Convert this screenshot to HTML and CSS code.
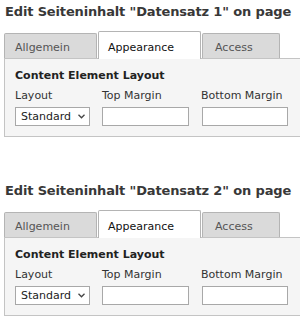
FILE: index.html
```html
<!DOCTYPE html>
<html>
<head>
<meta charset="utf-8">
<link rel="stylesheet" href="styles.css">
</head>
<body>
<section class="block">
  <h1 class="title">Edit Seiteninhalt "Datensatz 1" on page</h1>
  <div class="tabs">
    <div class="tab tab-a">Allgemein</div>
    <div class="tab tab-b active">Appearance</div>
    <div class="tab tab-c">Access</div>
  </div>
  <div class="panel">
    <div class="heading">Content Element Layout</div>
    <div class="fields">
      <div class="label">Layout</div>
      <div class="label">Top Margin</div>
      <div class="label">Bottom Margin</div>
      <div class="select">Standard<svg class="chev" width="7" height="5" viewBox="0 0 7 5"><polyline points="0.5,0.8 3.5,3.8 6.5,0.8" fill="none" stroke="#444" stroke-width="1.3"/></svg></div>
      <div class="input"></div>
      <div class="input"></div>
    </div>
  </div>
</section>
<section class="block">
  <h1 class="title">Edit Seiteninhalt "Datensatz 2" on page</h1>
  <div class="tabs">
    <div class="tab tab-a">Allgemein</div>
    <div class="tab tab-b active">Appearance</div>
    <div class="tab tab-c">Access</div>
  </div>
  <div class="panel">
    <div class="heading">Content Element Layout</div>
    <div class="fields">
      <div class="label">Layout</div>
      <div class="label">Top Margin</div>
      <div class="label">Bottom Margin</div>
      <div class="select">Standard<svg class="chev" width="7" height="5" viewBox="0 0 7 5"><polyline points="0.5,0.8 3.5,3.8 6.5,0.8" fill="none" stroke="#444" stroke-width="1.3"/></svg></div>
      <div class="input"></div>
      <div class="input"></div>
    </div>
  </div>
</section>
</body>
</html>
```
FILE: styles.css
```css
html, body {
  margin: 0;
  padding: 0;
  background: #ffffff;
}
body {
  font-family: "DejaVu Sans", Verdana, sans-serif;
  color: #222;
  width: 300px;
  overflow: hidden;
}
.block {
  padding-left: 4px;
  padding-top: 4px;
  margin-bottom: 42px;
}
.block:last-child {
  margin-bottom: 0;
}
.title {
  margin: 0 0 11px 1px;
  font-size: 13px;
  line-height: 16px;
  font-weight: bold;
  letter-spacing: -0.15px;
  color: #383838;
  white-space: nowrap;
}
.tabs {
  display: flex;
  align-items: flex-end;
  height: 27px;
  position: relative;
  z-index: 1;
}
.tab {
  box-sizing: border-box;
  font-size: 11px;
  line-height: 13px;
  color: #555;
  background: #dadada;
  border: 1px solid #b4b4b4;
  border-bottom: none;
  border-radius: 2px 2px 0 0;
  height: 25px;
  padding-top: 7px;
  margin-right: 1px;
}
.tab-a { width: 93px; padding-left: 10px; }
.tab-b { width: 103px; padding-left: 9px; }
.tab-c { width: 78px; padding-left: 12px; }
.tab.active {
  background: #ffffff;
  color: #111;
  height: 28px;
  padding-top: 9px;
  margin-bottom: -1px;
}
.panel {
  box-sizing: border-box;
  height: 79px;
  background: #f5f5f5;
  border: 1px solid #c4c4c4;
  border-right: none;
  padding: 10px 0 0 10px;
}
.heading {
  font-size: 11px;
  line-height: 13px;
  font-weight: bold;
  color: #222;
}
.fields {
  display: grid;
  grid-template-columns: 75px 87px 87px;
  column-gap: 12px;
  margin-top: 7px;
}
.label {
  font-size: 11px;
  line-height: 13px;
  color: #333;
  margin-bottom: 5px;
}
.select, .input {
  box-sizing: border-box;
  height: 19px;
  background: #fff;
  border: 1px solid #a8a8a8;
}
.select {
  font-size: 11px;
  line-height: 17px;
  color: #222;
  padding-left: 5px;
  display: flex;
  align-items: center;
  justify-content: space-between;
  padding-right: 4px;
}
.input + .input {
  margin-left: 1px;
}
```
